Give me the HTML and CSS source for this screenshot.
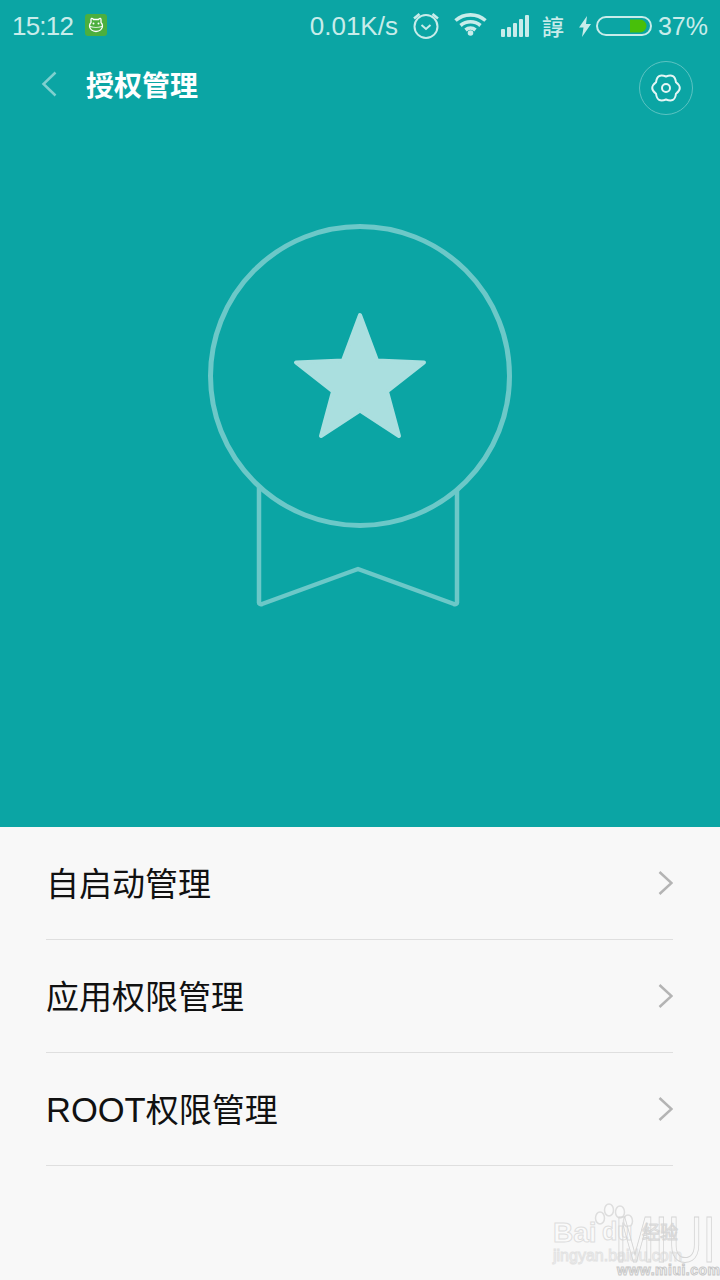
FILE: index.html
```html
<!DOCTYPE html>
<html lang="zh-CN">
<head>
    <meta charset="UTF-8">
    <meta name="viewport" content="width=device-width, initial-scale=1.0">
    <title>授权管理</title>
    <link rel="stylesheet" href="styles.css">
</head>
<body>
  <div class="hero">
    <div class="status_bar">
      <div class="status_left">
        <span class="clock">15:12</span>
        <svg class="app_icon" width="22" height="22" viewBox="0 0 22 22">
          <rect width="22" height="22" rx="3" fill="#4caf3e"/>
          <path d="M6 8.500V5.500c0-1 1-1.500 1.800-.8L8.500 5.500h5l.7-.8c.8-.7 1.800-.2 1.800.8V8.500c1 1 1.500 2 1.500 3.500 0 3-2.800 5.500-6.500 5.500S4.500 15 4.500 12c0-1.500.5-2.500 1.500-3.500z" fill="none" stroke="#fff" stroke-width="1.300"/>
          <path d="M5 12.500c3 1 9 1 12 0" fill="none" stroke="#fff" stroke-width="1.200"/>
          <circle cx="8.500" cy="9.500" r="1" fill="#fff"/>
          <circle cx="13.500" cy="9.500" r="1" fill="#fff"/>
        </svg>
      </div>
      <div class="status_right">
        <span class="speed">0.01K/s</span>
        <svg class="alarm" width="28" height="28" viewBox="0 0 28 28" fill="none" stroke="#c8ecea" stroke-width="2">
          <circle cx="14" cy="15.500" r="11.500"/>
          <path d="M9.500 14l4.500 4 4.500-4"/>
          <path d="M2 7.500L7.500 3M26 7.500L20.500 3" stroke-width="2.500"/>
        </svg>
        <svg class="wifi" width="33" height="24" viewBox="0 0 33 24" fill="none" stroke="#c8ecea" stroke-width="3.600">
          <path d="M1.500 8.500C10 1 23 1 31.500 8.500"/>
          <path d="M6.500 13.500c6-5 14-5 20 0"/>
          <path d="M11.500 18c3-2.500 7-2.500 10 0"/>
          <circle cx="16.500" cy="21" r="2.800" fill="#c8ecea" stroke="none"/>
        </svg>
        <svg class="signal" width="28" height="22" viewBox="0 0 28 22" fill="#c8ecea">
          <rect x="0" y="14" width="4" height="8" rx="1"/>
          <rect x="6" y="12" width="4" height="10" rx="1"/>
          <rect x="12" y="8" width="4" height="14" rx="1"/>
          <rect x="18" y="4" width="4" height="18" rx="1"/>
          <rect x="24" y="0" width="4" height="22" rx="1"/>
        </svg>
        <span class="carrier">諄</span>
        <svg class="bolt" width="12" height="21" viewBox="0 0 12 21">
          <path d="M8 0L0 11.500h4.500L3 21l9-13H7z" fill="#c8ecea"/>
        </svg>
        <svg class="battery" width="56" height="20" viewBox="0 0 56 20">
          <rect x="1" y="1" width="54" height="18" rx="9" fill="none" stroke="#c8ecea" stroke-width="2"/>
          <path d="M34 3.500h10a6.500 6.500 0 0 1 0 13H34z" fill="#48bf0a"/>
        </svg>
        <span class="percent">37%</span>
      </div>
    </div>

    <div class="nav">
      <svg class="back" width="16" height="26" viewBox="0 0 16 26" fill="none" stroke="#7fd0cf" stroke-width="2.500">
        <path d="M14.500 1.500L2.500 13 14.500 24.500"/>
      </svg>
      <h1 class="title">授权管理</h1>
      <div class="settings">
        <svg width="30" height="30" viewBox="-1 -1 30 30" fill="none" stroke="#e4f6f5" stroke-width="2" stroke-linejoin="round">
          <path d="M14 2.500Q5.200-1.240 4.040 8.250-3.600 14 4.040 19.750 5.200 29.240 14 25.500 22.800 29.240 23.960 19.750 31.600 14 23.960 8.250 22.800-1.240 14 2.500z"/>
          <circle cx="14" cy="14" r="4"/>
        </svg>
      </div>
    </div>

    <svg class="medal" width="320" height="400" viewBox="0 0 320 400" fill="none">
      <path d="M59 270V387a2 2 0 0 0 3 2L158 354 254 389a2 2 0 0 0 3-2V273" stroke="#6cc8c8" stroke-width="4.500" stroke-linejoin="round"/>
      <circle cx="160" cy="161" r="149.500" stroke="#6cc8c8" stroke-width="5" fill="#0ba5a4"/>
      <path d="M160 100L177 145.500 224 147.500 187 176.500 199 221 160 195.500 121 221 133 176.500 96 147.500 143 145.500z" fill="#aadfdf" stroke="#aadfdf" stroke-width="4" stroke-linejoin="round"/>
    </svg>
  </div>

  <div class="list">
    <div class="row"><span>自启动管理</span><svg width="16" height="26" viewBox="0 0 16 26" fill="none" stroke="#b4b4b4" stroke-width="2.500"><path d="M2.500 2L14.500 13 2.500 24"/></svg></div>
    <div class="row"><span>应用权限管理</span><svg width="16" height="26" viewBox="0 0 16 26" fill="none" stroke="#b4b4b4" stroke-width="2.500"><path d="M2.500 2L14.500 13 2.500 24"/></svg></div>
    <div class="row"><span><span class="latin">ROOT</span>权限管理</span><svg width="16" height="26" viewBox="0 0 16 26" fill="none" stroke="#b4b4b4" stroke-width="2.500"><path d="M2.500 2L14.500 13 2.500 24"/></svg></div>
  </div>

  <div class="watermark">
    <svg class="paw" width="46" height="34" viewBox="0 0 46 34" fill="#fafafa" stroke="#dedede" stroke-width="1.500">
      <ellipse cx="7" cy="17" rx="4.500" ry="6"/>
      <ellipse cx="16" cy="9" rx="4.500" ry="6"/>
      <ellipse cx="27" cy="11" rx="4.500" ry="6"/>
      <ellipse cx="35" cy="20" rx="4.500" ry="6"/>
    </svg>
    <span class="wm_bai">Bai</span>
    <span class="wm_du">du</span>
    <span class="wm_jy">经验</span>
    <span class="wm_site">jingyan.baidu.com</span>
    <span class="wm_miui">MIUI</span>
    <span class="wm_www">www.miui.com</span>
  </div>
</body>
</html>
```

FILE: styles.css
```css
* {
  margin: 0;
  padding: 0;
  box-sizing: border-box;
}

body {
  width: 720px;
  height: 1280px;
  overflow: hidden;
  position: relative;
  background-color: #f8f8f8;
  font-family: "Liberation Sans", "Noto Sans CJK SC", sans-serif;
}

.hero {
  height: 827px;
  background-color: #0ba5a4;
  display: flex;
  flex-direction: column;
}

.status_bar {
  height: 52px;
  padding: 0 12px;
  display: flex;
  justify-content: space-between;
  align-items: center;
  color: #c8ecea;
  font-size: 26px;
}
.status_left,
.status_right {
  display: flex;
  align-items: center;
}
.clock {
  letter-spacing: -.8px;
}
.app_icon {
  margin-left: 12px;
  margin-top: -2px;
}
.alarm {
  margin-left: 14px;
  margin-top: -3px;
}
.wifi {
  margin-left: 14px;
  margin-top: -4px;
}
.signal {
  margin-left: 14px;
}
.carrier {
  margin-left: 13px;
  margin-right: 1px;
  font-size: 22px;
  font-weight: 500;
  font-family: "Noto Sans CJK TC", sans-serif;
  margin-top: -2px;
}
.bolt {
  margin-left: 14px;
}
.battery {
  margin-left: 5px;
}
.percent {
  margin-left: 6px;
  font-size: 25px;
}

.nav {
  height: 68px;
  padding: 0 27px 0 41px;
  display: flex;
  align-items: center;
}
.back {
  margin-top: -4px;
}
.title {
  margin-left: 29px;
  margin-top: -4px;
  flex: 1;
  color: #fff;
  font-size: 28px;
  font-weight: 700;
  font-family: "Noto Sans CJK SC", sans-serif;
}
.settings {
  width: 54px;
  height: 54px;
  margin-top: 4px;
  border: 1px solid #5cc3c2;
  border-radius: 50%;
  display: flex;
  justify-content: center;
  align-items: center;
}

.medal {
  margin: 95px auto 0;
}

.list {
  padding: 0 47px 0 46px;
}
.row {
  height: 113px;
  border-bottom: 1px solid #dfdfdf;
  display: flex;
  justify-content: space-between;
  align-items: center;
  color: #111;
  font-size: 33px;
}
.row > span {
  margin-top: -3px;
}
.latin {
  font-size: 34.500px;
}

/* photo watermark, sits over the page corner */
.watermark {
  position: absolute;
  left: 0;
  top: 0;
  width: 720px;
  height: 1280px;
  pointer-events: none;
}
.watermark span {
  position: absolute;
  white-space: nowrap;
  color: #fafafa;
  line-height: 1;
}
.paw {
  position: absolute;
  left: 593px;
  top: 1201px;
}
.wm_bai {
  left: 553px;
  top: 1219px;
  font-size: 28px;
  font-weight: 700;
  -webkit-text-stroke: 1px #dedede;
}
.wm_du {
  left: 602px;
  top: 1219px;
  font-size: 25px;
  font-weight: 700;
  -webkit-text-stroke: 1px #dedede;
}
.wm_jy {
  left: 642px;
  top: 1224px;
  font-size: 18px;
  -webkit-text-stroke: 1px #d8d8d8;
}
.wm_site {
  left: 553px;
  top: 1248px;
  font-size: 16px;
  -webkit-text-stroke: 1px #e2e2e2;
}
.wm_miui {
  left: 615px;
  top: 1208px;
  font-size: 64px;
  transform: scaleX(.745);
  transform-origin: left top;
  color: transparent !important;
  -webkit-text-stroke: 1px #d4d4d4;
}
.wm_www {
  left: 617px;
  top: 1263px;
  font-size: 14px;
  font-weight: 700;
  letter-spacing: .5px;
  -webkit-text-stroke: 1px #c8c8c8;
}
```
